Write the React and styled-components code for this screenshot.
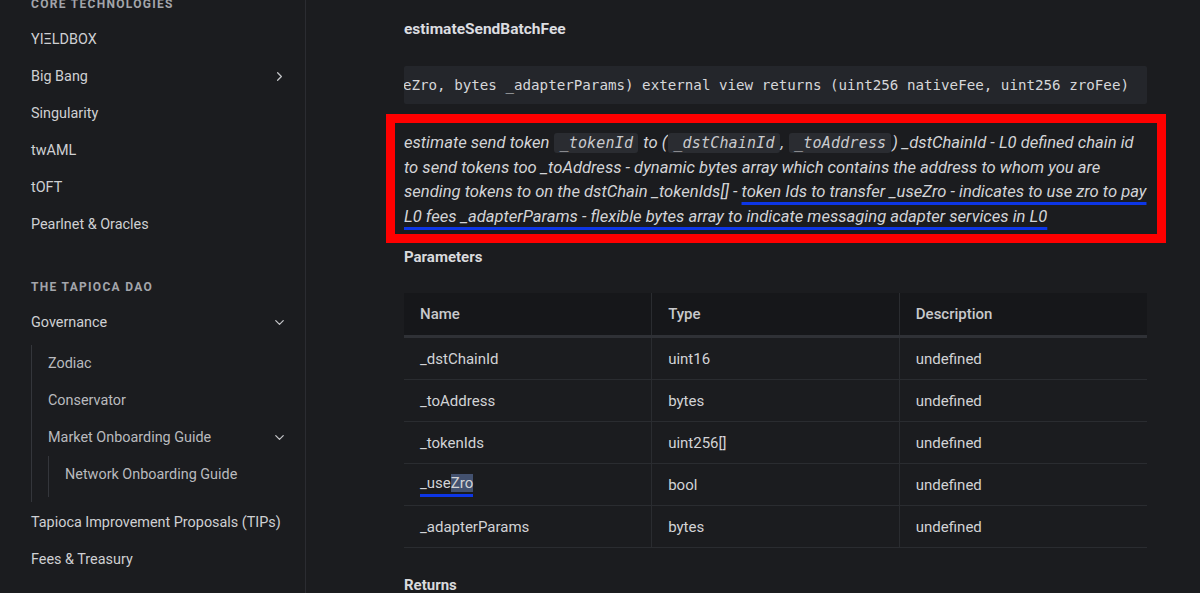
import styled, { createGlobalStyle } from "styled-components";
import { ChevronRight, ChevronDown } from "lucide-react";

const GlobalStyle = createGlobalStyle`
  html, body {
    margin: 0;
    padding: 0;
    background: #1b1c1f;
    overflow: hidden;
  }
  body {
    font-family: Roboto, "Liberation Sans", sans-serif;
    color: #d2d3d6;
  }
`;

const params = [
  { name: "_dstChainId", type: "uint16" },
  { name: "_toAddress", type: "bytes" },
  { name: "_tokenIds", type: "uint256[]" },
  { name: "_useZro", type: "bool", marked: true },
  { name: "_adapterParams", type: "bytes" },
];

function NavItem({ label, chevron }) {
  return (
    <Item>
      <span>{label}</span>
      {chevron === "right" && <ChevronRight size={15} strokeWidth={2} />}
      {chevron === "down" && <ChevronDown size={15} strokeWidth={2} />}
    </Item>
  );
}

export default function App() {
  return (
    <Page>
      <GlobalStyle />
      <Sidebar>
        <SideScroll>
          <SectionTitle>Core Technologies</SectionTitle>
          <NavItem label="YIΞLDBOX" />
          <NavItem label="Big Bang" chevron="right" />
          <NavItem label="Singularity" />
          <NavItem label="twAML" />
          <NavItem label="tOFT" />
          <NavItem label="Pearlnet & Oracles" />
          <SectionTitle>The Tapioca DAO</SectionTitle>
          <NavItem label="Governance" chevron="down" />
          <Nested>
            <NavItem label="Zodiac" />
            <NavItem label="Conservator" />
            <NavItem label="Market Onboarding Guide" chevron="down" />
            <Nested inner>
              <NavItem label="Network Onboarding Guide" />
            </Nested>
          </Nested>
          <NavItem label="Tapioca Improvement Proposals (TIPs)" />
          <NavItem label="Fees & Treasury" />
        </SideScroll>
      </Sidebar>
      <Main>
        <TopEdge />
        <Content>
          <FnTitle>estimateSendBatchFee</FnTitle>
          <CodeBlock>
            <code>
              function estimateSendBatchFee(uint16 _dstChainId, bytes _toAddress, uint256[] _tokenIds, bool _useZro, bytes _adapterParams) external view returns (uint256 nativeFee, uint256 zroFee)
            </code>
          </CodeBlock>
          <Highlight>
            <Description>
              estimate send token <InlineCode>_tokenId</InlineCode> to (
              <InlineCode>_dstChainId</InlineCode>,{" "}
              <InlineCode>_toAddress</InlineCode>) _dstChainId - L0 defined chain id
              to send tokens too _toAddress - dynamic bytes array which contains the
              address to whom you are sending tokens to on the dstChain _tokenIds[] -{" "}
              <Marked>
                token Ids to transfer _useZro - indicates to use zro to pay L0 fees
                _adapterParams - flexible bytes array to indicate messaging adapter
                services in L0
              </Marked>
            </Description>
          </Highlight>
          <SubTitle>Parameters</SubTitle>
          <Table>
            <thead>
              <tr>
                <Th>Name</Th>
                <Th>Type</Th>
                <Th>Description</Th>
              </tr>
            </thead>
            <tbody>
              {params.map((p) => (
                <tr key={p.name}>
                  <Td>
                    {p.marked ? (
                      <NameMark>
                        _use<Selected>Zro</Selected>
                      </NameMark>
                    ) : (
                      p.name
                    )}
                  </Td>
                  <Td>{p.type}</Td>
                  <Td>undefined</Td>
                </tr>
              ))}
            </tbody>
          </Table>
          <SubTitle>Returns</SubTitle>
        </Content>
      </Main>
    </Page>
  );
}

const Page = styled.div`
  display: flex;
  width: 1200px;
  height: 593px;
  overflow: hidden;
  background: #1b1c1f;
`;

const Sidebar = styled.aside`
  width: 305px;
  flex-shrink: 0;
  border-right: 1px solid #2b2c31;
  overflow: hidden;
`;

const SideScroll = styled.nav`
  margin-top: -40px;
  padding: 0 18px 0 31px;
`;

const SectionTitle = styled.div`
  padding: 36px 0 9px;
  font-size: 12px;
  line-height: 16px;
  font-weight: 700;
  letter-spacing: 1.3px;
  text-transform: uppercase;
  color: #a3a5ab;
`;

const Item = styled.div`
  display: flex;
  align-items: center;
  justify-content: space-between;
  height: 37px;
  font-size: 14.4px;
  color: #cfd0d3;
  svg {
    color: #c4c5c8;
  }
`;

const Nested = styled.div`
  margin: ${({ inner }) => (inner ? "0" : "4px 0 2px 0")};
  padding: ${({ inner }) => (inner ? "0 0 4px 16px" : "0 0 5px 16px")};
  border-left: 1px solid #34363b;
  & > div {
    color: #b9babe;
  }
`;

const Main = styled.main`
  flex: 1;
  display: flex;
  flex-direction: column;
  min-width: 0;
`;

const TopEdge = styled.div`
  height: 3px;
  background: #222328;
`;

const Content = styled.div`
  width: 743px;
  padding: 19px 0 0 98px;
`;

const FnTitle = styled.h3`
  margin: 0;
  font-size: 15.5px;
  line-height: 20px;
  font-weight: 700;
  color: #dcdde0;
`;

const CodeBlock = styled.pre`
  margin: 27px 0 0;
  height: 38px;
  display: flex;
  justify-content: flex-end;
  align-items: center;
  padding: 0 18px 0 0;
  overflow: hidden;
  background: #24262b;
  border-radius: 2px;
  font-family: "DejaVu Sans Mono", "Liberation Mono", monospace;
  font-size: 14.2px;
  color: #d6d7da;
  white-space: nowrap;
  code {
    flex-shrink: 0;
  }
`;

const Highlight = styled.div`
  margin: 10px -19px 0 -18px;
  border: 9px solid #ff0000;
  padding: 8px 9px 5px;
`;

const Description = styled.p`
  margin: 0;
  font-size: 16.6px;
  line-height: 24.5px;
  font-style: italic;
  color: #d3d4d7;
`;

const InlineCode = styled.code`
  margin: 0 1px;
  padding: 1px 5px;
  border-radius: 3px;
  background: #2a2c31;
  font-family: "DejaVu Sans Mono", "Liberation Mono", monospace;
  font-size: 15px;
  font-style: italic;
  letter-spacing: 0.2px;
  color: #c9cacd;
`;

const Marked = styled.span`
  text-decoration: underline;
  text-decoration-color: #0d36e6;
  text-decoration-thickness: 3px;
  text-underline-offset: 5px;
`;

const SubTitle = styled.h4`
  margin: 4px 0 0;
  font-size: 15px;
  line-height: 20px;
  font-weight: 700;
  color: #d9dadd;
  & + table {
    margin-top: 26px;
  }
  table + & {
    margin-top: 27px;
  }
`;

const Table = styled.table`
  width: 743px;
  border-collapse: collapse;
  table-layout: fixed;
  font-size: 15px;
  color: #d2d3d6;
`;

const Th = styled.th`
  height: 42px;
  padding: 0 16px;
  text-align: left;
  font-weight: 500;
  color: #c8c9cc;
  background: #16171a;
  border-bottom: 3px solid #2f3136;
  & + & {
    border-left: 1px solid #2a2c30;
  }
`;

const Td = styled.td`
  height: 41px;
  padding: 0 16px;
  border-bottom: 1px solid #2a2c30;
  & + & {
    border-left: 1px solid #2a2c30;
  }
`;

const NameMark = styled.span`
  display: inline-block;
  border-bottom: 3px solid #0d36e6;
  line-height: 22px;
`;

const Selected = styled.span`
  background: #43516f;
`;
